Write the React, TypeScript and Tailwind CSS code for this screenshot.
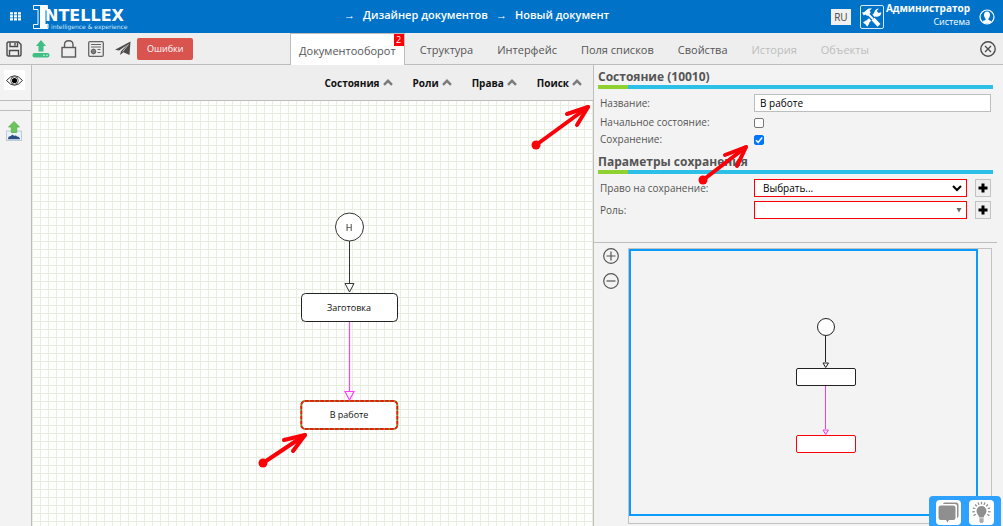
import { useState } from "react";
import type { ReactNode } from "react";

const TABS = [
  { title: "Документооборот", badge: 2 },
  { title: "Структура" },
  { title: "Интерфейс" },
  { title: "Поля списков" },
  { title: "Свойства" },
  { title: "История", disabled: true },
  { title: "Объекты", disabled: true },
];

const CANVAS_MENUS = ["Состояния", "Роли", "Права", "Поиск"];

function AppsIcon() {
  return (
    <svg width="11" height="9" viewBox="0 0 11 9" fill="#fff">
      {[0, 4, 8].map((x) =>
        [0, 3, 6].map((y) => <rect key={`${x}-${y}`} x={x} y={y + 0.2} width="3" height="2.3" />)
      )}
    </svg>
  );
}

function Logo() {
  return (
    <a href="#" aria-label="Intellex" className="relative flex h-6 w-24 text-white">
      <svg width="17" height="24" viewBox="0 0 17 24">
        <path
          d="M0.5 0.5H14.5V5.5L10.5 3.5V20.5L15 19V23.5H0.5V19.5H5V4.5H0.5Z"
          fill="none"
          stroke="#fff"
          strokeWidth="1"
        />
        <path d="M7 1H14.5V5H12.5V19H14.5V23.5H7Z" fill="#fff" />
      </svg>
      <span className="absolute left-3 top-[3px] font-['DejaVu_Sans'] text-[16px] font-bold leading-4">NTELLEX</span>
      <span className="absolute left-[18px] top-[19px] whitespace-nowrap font-['DejaVu_Sans'] text-[6px] leading-[6px] text-[#cfe4f6]">
        intelligence &amp; experience
      </span>
    </a>
  );
}

function ToolsIcon() {
  return (
    <svg width="24" height="24" viewBox="0 0 24 24">
      <rect x="0.5" y="0.5" width="23" height="23" rx="1.5" fill="none" stroke="#d7e8f7" />
      <path d="M6 18.5L16 8.5" stroke="#fff" strokeWidth="3.4" />
      <path d="M3 17.5l3.2-2.2 3.2 3-2.2 3.4-1.6-2.1z" fill="#fff" />
      <path d="M14.6 9.6c-1-3 .8-6 4.2-6.2l-2 2.6 1.6 2 2.9-.8c.2 3-2.6 5.2-5.6 4.2z" fill="#fff" />
      <path d="M8.8 9.6L19 20" stroke="#0073c9" strokeWidth="5" />
      <path d="M8 9L13 14" stroke="#fff" strokeWidth="2" />
      <path d="M13 14l6 6.4" stroke="#fff" strokeWidth="4" />
      <path d="M2 7.6l2-.4 4-3.4 4-.6-2.4 2.6 1.2 1.6-3.6 3.6-1.8-1.6-1.6 1.2z" fill="#fff" />
    </svg>
  );
}

function UserIcon() {
  return (
    <svg width="16" height="16" viewBox="0 0 16 16">
      <circle cx="8" cy="8" r="7" fill="none" stroke="#fff" strokeWidth="1.2" />
      <path d="M8 2.6c2 0 3 1.5 3 3.2S10 9.300 9.400 9.800v1c.6.6 2.200.8 3 1.600C11.400 13.800 9.800 14.500 8 14.500s-3.400-.7-4.400-2.100c.8-.8 2.400-1 3-1.600v-1C6 9.300 5 7.500 5 5.800s1-3.200 3-3.200z" fill="#fff" />
    </svg>
  );
}

function SaveIcon() {
  return (
    <svg width="16" height="16" viewBox="0 0 16 16" fill="none" stroke="#4a4a4a" strokeWidth="1.4">
      <path d="M1 2.500Q1 1 2.500 1H12.500L15 3.500V13.500Q15 15 13.500 15H2.500Q1 15 1 13.500Z" />
      <path d="M4 1.500V5.500H11.500V1.500M9 2v2.500M3.500 14.500V9.500H12.500V14.500" />
    </svg>
  );
}

function UploadIcon() {
  return (
    <svg width="18" height="18" viewBox="0 0 18 18" fill="#3fbf83">
      <path d="M9 0L14 6H11.500V11.500H6.500V6H4Z" />
      <rect x="0.500" y="13" width="17" height="4.500" rx="2" />
      <circle cx="12" cy="15.300" r="0.800" fill="#d9f5e7" />
      <circle cx="15" cy="15.300" r="0.800" fill="#d9f5e7" />
    </svg>
  );
}

function LockIcon() {
  return (
    <svg width="16" height="18" viewBox="0 0 16 18" fill="none" stroke="#5a5a5a" strokeWidth="1.400">
      <rect x="1" y="7.500" width="13.500" height="9.500" />
      <path d="M3.500 7.500V5Q3.500 0.800 7.800 0.800T12 5V7.500" />
    </svg>
  );
}

function ReportIcon() {
  return (
    <svg width="16" height="16" viewBox="0 0 16 16" fill="none" stroke="#666" strokeWidth="1">
      <rect x="0.700" y="0.700" width="14.600" height="14.600" rx="1.200" strokeWidth="1.300" />
      <path d="M3 3.500H13M3 6H13M9.500 8.500H12.500M9.500 11.500H12.500" />
      <circle cx="5.500" cy="10.500" r="1.900" strokeWidth="1.500" />
      <path d="M5.500 7.700v5.600M2.700 10.500h5.600" strokeWidth="0.700" />
    </svg>
  );
}

function PlaneIcon() {
  return (
    <svg width="16" height="15" viewBox="0 0 16 15" fill="#4a4a4a">
      <path d="M15.500 0.500L0 8.800L4.200 9.600L12.500 3.500L6 10.200L5 14L8.400 11.200L14.500 14Z" />
      <path d="M13.500 3.500L7.500 10.800" stroke="#eee" strokeWidth="0.700" />
    </svg>
  );
}

function EyeIcon() {
  return (
    <svg width="17" height="11" viewBox="0 0 17 11">
      <path d="M0.500 5.500Q8.500-4 16.500 5.500Q8.500 15 0.500 5.500Z" fill="#fff" stroke="#333" strokeWidth="1" />
      <circle cx="8.500" cy="5.500" r="3.800" fill="#fff" stroke="#333" strokeWidth="0.800" />
      <circle cx="8.500" cy="5.500" r="2.600" fill="#000" />
    </svg>
  );
}

function ExportPictureIcon() {
  return (
    <svg width="16" height="20" viewBox="0 0 16 20">
      <rect x="0.500" y="10" width="15" height="9.500" fill="#eaf2f9" stroke="#bccbd8" />
      <path d="M2 18.300Q2 15 5 15Q6.500 12.500 8 15Q10 14 11 15.500Q14 16 14 18.300Z" fill="#2c4f86" />
      <path d="M8 0.500L13.500 6H10.700V11.500H5.300V6H2.500Z" fill="#69c55c" stroke="#58ae4d" strokeWidth="0.800" />
    </svg>
  );
}

function CloseIcon() {
  return (
    <svg width="16" height="16" viewBox="0 0 16 16" fill="none" stroke="#4d4d4d" strokeWidth="1.400">
      <circle cx="8" cy="8" r="7.200" />
      <path d="M5 5L11 11M11 5L5 11" />
    </svg>
  );
}

function ZoomIcon({ plus }: { plus?: boolean }) {
  return (
    <svg width="16" height="16" viewBox="0 0 16 16" fill="none" stroke="#555" strokeWidth="1.200">
      <circle cx="8" cy="8" r="7.300" />
      <path d={plus ? "M3.500 8H12.500M8 3.500V12.500" : "M3.500 8H12.500"} />
    </svg>
  );
}

function MenuChevron() {
  return (
    <svg width="10" height="7" viewBox="0 0 10 7">
      <path d="M1 5.800L5 1.800L9 5.800" fill="none" stroke="#7b7b7b" strokeWidth="2.400" />
    </svg>
  );
}

function ChatIcon() {
  return (
    <svg width="21" height="21" viewBox="0 0 21 21" fill="#8f8f8f">
      <path d="M5 2.500Q5 0.500 7 0.500H18Q20.500 0.500 20.500 3V14Q20.500 15.500 19 16V4Q19 2 17 2H5Z" />
      <path d="M3 3.500H15Q17.500 3.500 17.500 6V15.500Q17.500 18 15 18H11L9.500 20.500L8 18H3Q0.500 18 0.500 15.500V6Q0.500 3.500 3 3.500Z" />
    </svg>
  );
}

function BulbIcon() {
  const rays = [-120, -95, -70, -45, -22, 0, 22, 45, 70, 95, 120];
  return (
    <svg width="21" height="23" viewBox="0 0 21 23" fill="#8f8f8f">
      <path d="M10.500 5a5 5 0 0 1 5 5c0 3-2.500 4-2.700 6.500H8.200C8 14 5.500 13 5.500 10a5 5 0 0 1 5-5z" />
      <path d="M8.400 17.300h4.200v3.200l-1 1.500h-2.200l-1-1.500z" fill="#aaa" />
      {rays.map((angle) => (
        <path key={angle} d="M10.500 0.800v2.600" stroke="#8f8f8f" strokeWidth="1.300" transform={`rotate(${angle} 10.500 10)`} />
      ))}
    </svg>
  );
}

type Point = [number, number];

function PointerArrow({ from, to, barbs }: { from: Point; to: Point; barbs: [Point, Point] }) {
  return (
    <svg width="70" height="60" viewBox="0 0 70 60" fill="none" stroke="#fb0007" strokeWidth="4" strokeLinecap="round">
      <circle cx={from[0]} cy={from[1]} r="4.500" fill="#fb0007" stroke="none" />
      <path d={`M${from.join(" ")}L${to.join(" ")}`} />
      <path d={`M${barbs[0].join(" ")}L${to.join(" ")}L${barbs[1].join(" ")}`} strokeLinejoin="round" />
    </svg>
  );
}

function Workflow() {
  return (
    <svg
      className="absolute left-[268px] top-[111px] font-['Open_Sans',sans-serif] text-[9px]"
      width="100"
      height="219"
      viewBox="-1 0 100 219"
      fill="none"
    >
      <circle cx="48.500" cy="15" r="14" fill="#fff" stroke="#333" />
      <path d="M48.500 29V71M44 71.500H53L48.500 80Z" stroke="#333" />
      <rect x="0.500" y="81.500" width="96" height="28" rx="4" fill="#fff" stroke="#222" />
      <path d="M48.500 110V179M44 179.500H53L48.500 188Z" stroke="#ff40ff" strokeWidth="1.200" />
      <rect x="0.300" y="189" width="96" height="28" rx="4" fill="#fff" stroke="#6f9a1e" strokeWidth="1.800" />
      <rect x="0.300" y="189" width="96" height="28" rx="4" stroke="#f31616" strokeWidth="1.800" strokeDasharray="3.500 1.500" />
      <g fill="#111" textAnchor="middle">
        <text x="48" y="19">Н</text>
        <text x="48" y="99">Заготовка</text>
        <text x="48" y="206">В работе</text>
      </g>
    </svg>
  );
}

function MiniMap() {
  return (
    <div className="relative mr-[5px] flex-1 border border-[#c2c2c2]">
      <div className="absolute bottom-[7px] left-0 right-[13px] top-0 border-2 border-[#0a9bff]">
        <svg className="absolute left-[165px] top-[66px]" width="62" height="138" viewBox="0 0 62 138" fill="none">
          <circle cx="30" cy="10" r="8.500" fill="#fff" stroke="#222" />
          <path d="M29.500 19V45M27 46H32.500L29.700 50.500Z" stroke="#222" />
          <rect x="0.500" y="51.500" width="59" height="17" rx="1.500" fill="#fff" stroke="#222" />
          <path d="M29.500 69V112M27 113H32.500L29.700 117.500Z" stroke="#f03cf0" />
          <rect x="0.500" y="118.500" width="59" height="17" rx="1.500" fill="#fff" stroke="#fb0007" />
        </svg>
      </div>
    </div>
  );
}

function SectionTitle({ children }: { children: ReactNode }) {
  return (
    <h2 className="border-b-4 border-[#2cbfe8] text-[12px] font-bold leading-4 text-[#555]">
      {children}
      <span className="-mb-1 block h-1 w-[30px] bg-[#8fd12e]" />
    </h2>
  );
}

function Field({ id, label, children }: { id: string; label: string; children: ReactNode }) {
  return (
    <div className="flex items-center pl-[2px] pr-[2px]">
      <label htmlFor={id} className="w-[154px] shrink-0 text-[10px] leading-[13px] text-[#555]">
        {label}
      </label>
      {children}
    </div>
  );
}

function AddButton({ label }: { label: string }) {
  return (
    <button aria-label={label} className="ml-2 flex h-[18px] w-4 shrink-0 items-center justify-center border border-[#c2c2c2] bg-[#efefef]">
      <svg width="10" height="10" viewBox="0 0 10 10">
        <path d="M5 0.500V9.500M0.500 5H9.500" stroke="#000" strokeWidth="3" />
      </svg>
    </button>
  );
}

function CheckBox({ id, initial }: { id: string; initial: boolean }) {
  const [checked, setChecked] = useState(initial);
  return (
    <span className="relative flex">
      <input
        id={id}
        type="checkbox"
        checked={checked}
        onChange={(e) => setChecked(e.target.checked)}
        className="size-[10px] appearance-none rounded-[2px] border border-[#767676] bg-white checked:border-[#0075ff] checked:bg-[#0075ff]"
      />
      {checked && (
        <svg className="pointer-events-none absolute left-0 top-0" width="10" height="10" viewBox="0 0 10 10">
          <path d="M2 5.200L4.200 7.400L8.200 2.600" fill="none" stroke="#fff" strokeWidth="1.500" />
        </svg>
      )}
    </span>
  );
}

export default function App() {
  const [activeTab, setActiveTab] = useState("Документооборот");
  const [name, setName] = useState("В работе");

  return (
    <div className="flex h-screen flex-col overflow-hidden bg-[#f3f3f3] font-['Open_Sans',sans-serif] text-[#555]">
      <header className="relative flex h-[33px] shrink-0 items-center bg-[#0073c9] px-2 text-white">
        <button aria-label="Меню" className="ml-[2px] mr-3">
          <AppsIcon />
        </button>
        <Logo />
        <nav className="ml-[215px] flex items-center gap-2 pb-[3px] text-[11px] font-semibold leading-4">
          <span>→</span>
          <a href="#">Дизайнер документов</a>
          <span>→</span>
          <a href="#">Новый документ</a>
        </nav>
        <div className="ml-auto flex items-center">
          <button className="mr-[9px] h-4 w-5 bg-[#f0f0f0] text-[10px] leading-4 text-[#444]">RU</button>
          <ToolsIcon />
          <div className="ml-[2px] pb-1 text-right leading-[13px]">
            <div className="text-[10px] font-bold">Администратор</div>
            <div className="text-[9px] font-medium">Система</div>
          </div>
          <button aria-label="Профиль" className="ml-[9px]">
            <UserIcon />
          </button>
        </div>
      </header>

      <div className="flex h-8 shrink-0 border-b border-[#bdbdbd] bg-[#eee] pr-[7px]">
        <div className="flex w-[290px] shrink-0 items-center gap-[11px] pl-[6px]">
          <button aria-label="Сохранить"><SaveIcon /></button>
          <button aria-label="Загрузить" className="-ml-px"><UploadIcon /></button>
          <button aria-label="Блокировка"><LockIcon /></button>
          <button aria-label="Отчёт"><ReportIcon /></button>
          <button aria-label="Отправить"><PlaneIcon /></button>
          <button className="-ml-[5px] h-[22px] rounded-[2px] bg-[#d9534f] px-[10px] text-[9px] leading-[22px] text-white">
            Ошибки
          </button>
        </div>
        <nav className="flex gap-[6px] text-[11px] text-[#555]">
          {TABS.map((tab) => (
            <button
              key={tab.title}
              disabled={tab.disabled}
              onClick={() => setActiveTab(tab.title)}
              className={
                activeTab === tab.title
                  ? "relative -mb-px border border-b-0 border-[#bdbdbd] bg-white px-2 pt-[3px]"
                  : "border border-transparent px-2 pt-[3px] disabled:text-[#bdbdbd]"
              }
            >
              {tab.title}
              {tab.badge && (
                <span className="absolute right-0 top-0 h-3 w-[10px] bg-[#fb0007] text-[9px] leading-[11px] text-white">
                  {tab.badge}
                </span>
              )}
            </button>
          ))}
        </nav>
        <button aria-label="Закрыть" className="ml-auto">
          <CloseIcon />
        </button>
      </div>

      <div className="flex min-h-0 flex-1">
        <aside className="flex w-8 shrink-0 flex-col border-r border-[#bdbdbd]">
          <button aria-label="Просмотр" className="h-9 border-b border-[#bdbdbd] pb-[5px] pl-1">
            <span className="flex h-5 w-[21px] items-center justify-center bg-white">
              <EyeIcon />
            </span>
          </button>
          <div className="h-[10px] border-b border-[#bdbdbd]" />
          <button aria-label="Экспорт изображения" className="ml-[6px] mt-[10px]">
            <ExportPictureIcon />
          </button>
        </aside>

        <main className="flex min-w-0 flex-1 flex-col">
          <div className="flex h-9 shrink-0 items-center justify-end gap-5 border-b border-[#bdbdbd] bg-[#eee] pr-[11px]">
            {CANVAS_MENUS.map((menu) => (
              <button key={menu} className="flex items-center gap-[3px] text-[10px] font-bold leading-4 text-[#111]">
                {menu}
                <MenuChevron />
              </button>
            ))}
          </div>
          <div className="relative flex-1 bg-white bg-[linear-gradient(to_right,#e8eede_1px,transparent_1px),linear-gradient(to_bottom,#e8eede_1px,transparent_1px)] bg-[length:8px_8px] bg-[position:0_4px]">
            <Workflow />
            <div className="absolute left-[225px] top-[327px]">
              <PointerArrow from={[6, 35]} to={[48, 7]} barbs={[[27, 12], [36, 23]]} />
            </div>
            <div className="absolute -right-px -top-[1px] z-10">
              <PointerArrow from={[12, 45]} to={[64, 7]} barbs={[[43, 14], [53, 25]]} />
            </div>
          </div>
        </main>

        <section className="relative flex w-[410px] shrink-0 flex-col border-l border-[#bdbdbd] bg-[#f3f3f3] pr-[6px]">
          <div className="flex h-[178px] shrink-0 flex-col border-b border-[#bdbdbd] pl-1 pr-1 pt-1">
            <SectionTitle>Состояние (10010)</SectionTitle>
            <div className="flex flex-col gap-1 pt-[5px]">
              <Field id="state-name" label="Название:">
                <input
                  id="state-name"
                  value={name}
                  onChange={(e) => setName(e.target.value)}
                  className="h-[18px] min-w-0 flex-1 border border-[#bdbdbd] bg-white px-[5px] text-[10px] text-black"
                />
              </Field>
              <Field id="state-initial" label="Начальное состояние:">
                <CheckBox id="state-initial" initial={false} />
              </Field>
              <Field id="state-saving" label="Сохранение:">
                <CheckBox id="state-saving" initial={true} />
              </Field>
            </div>
            <div className="pt-2">
              <SectionTitle>Параметры сохранения</SectionTitle>
            </div>
            <div className="flex flex-col gap-1 pt-[5px]">
              <Field id="save-right" label="Право на сохранение:">
                <div className="relative flex min-w-0 flex-1">
                  <select
                    id="save-right"
                    className="h-[18px] w-full appearance-none border border-[#fb0007] bg-white pl-2 text-[10px] text-black"
                  >
                    <option>Выбрать...</option>
                  </select>
                  <svg className="pointer-events-none absolute right-[5px] top-[6px]" width="10" height="7" viewBox="0 0 10 7">
                    <path d="M1 1L5 5L9 1" fill="none" stroke="#000" strokeWidth="2" />
                  </svg>
                </div>
                <AddButton label="Добавить право" />
              </Field>
              <Field id="save-role" label="Роль:">
                <div className="relative flex min-w-0 flex-1">
                  <select
                    id="save-role"
                    className="h-[18px] w-full appearance-none border border-[#fb0007] bg-white pl-2 text-[10px] text-black"
                  >
                    <option></option>
                  </select>
                  <svg className="pointer-events-none absolute right-[5px] top-[6px]" width="6" height="6" viewBox="0 0 6 6">
                    <path d="M0.500 1H5.500L3 5.500Z" fill="#666" />
                  </svg>
                </div>
                <AddButton label="Добавить роль" />
              </Field>
            </div>
          </div>

          <div className="flex min-h-0 flex-1 pb-[2px] pt-[5px]">
            <div className="flex w-[34px] shrink-0 flex-col items-center gap-[9px]">
              <button aria-label="Увеличить"><ZoomIcon plus /></button>
              <button aria-label="Уменьшить"><ZoomIcon /></button>
            </div>
            <MiniMap />
          </div>

          <div className="absolute left-[103px] top-[75px]">
            <PointerArrow from={[6, 40]} to={[49, 7]} barbs={[[28, 15], [40, 26]]} />
          </div>

          <div className="absolute bottom-0 right-[2px] flex h-[30px] gap-2 rounded-t-[4px] bg-[#2ea1ff] px-[7px] pt-1">
            <button aria-label="Чат" className="flex size-[25px] items-center justify-center rounded-[4px] bg-white">
              <ChatIcon />
            </button>
            <button aria-label="Подсказки" className="flex size-[25px] items-center justify-center rounded-[4px] bg-white">
              <BulbIcon />
            </button>
          </div>
        </section>
      </div>
    </div>
  );
}
